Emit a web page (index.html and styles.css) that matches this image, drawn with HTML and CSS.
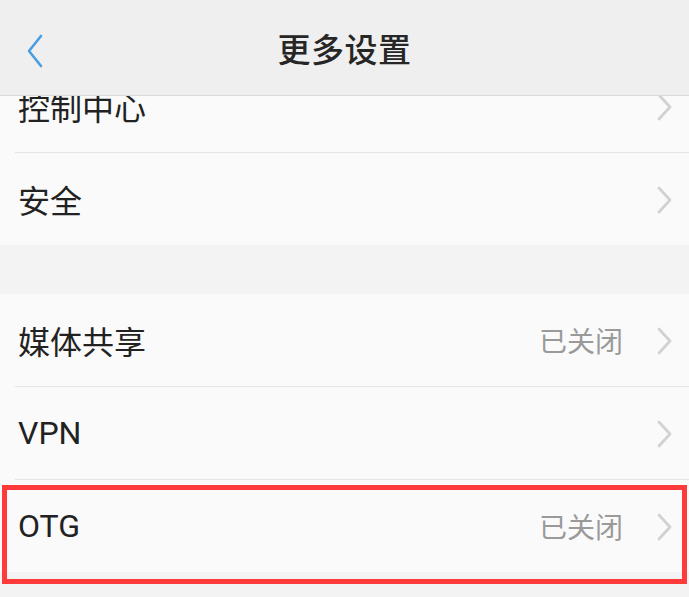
FILE: index.html
```html
<!DOCTYPE html>
<html lang="zh-CN">
<head>
    <meta charset="UTF-8">
    <meta name="viewport" content="width=device-width, initial-scale=1.0">
    <title>更多设置</title>
    <link rel="stylesheet" href="styles.css">
</head>
<body>
    <div class="screen">
        <div class="header">
            <svg class="back" width="24" height="36" viewBox="0 0 24 36">
                <polyline points="17,3 5,18 17,33" fill="none" stroke="#4a9de0" stroke-width="2.6" stroke-linecap="round" stroke-linejoin="round"/>
            </svg>
            <h1>更多设置</h1>
        </div>

        <div class="content">
            <div class="group first">
                <div class="row">
                    <span class="label">控制中心</span>
                    <svg class="chevron" width="18" height="28" viewBox="0 0 18 28"><polyline points="3,2 14,14 3,26" fill="none" stroke="#d2d2d2" stroke-width="2.8" stroke-linecap="round" stroke-linejoin="round"/></svg>
                </div>
                <div class="row">
                    <span class="label">安全</span>
                    <svg class="chevron" width="18" height="28" viewBox="0 0 18 28"><polyline points="3,2 14,14 3,26" fill="none" stroke="#d2d2d2" stroke-width="2.8" stroke-linecap="round" stroke-linejoin="round"/></svg>
                </div>
            </div>

            <div class="group">
                <div class="row">
                    <span class="label">媒体共享</span>
                    <span class="value">已关闭</span>
                    <svg class="chevron" width="18" height="28" viewBox="0 0 18 28"><polyline points="3,2 14,14 3,26" fill="none" stroke="#d2d2d2" stroke-width="2.8" stroke-linecap="round" stroke-linejoin="round"/></svg>
                </div>
                <div class="row">
                    <span class="label">VPN</span>
                    <svg class="chevron" width="18" height="28" viewBox="0 0 18 28"><polyline points="3,2 14,14 3,26" fill="none" stroke="#d2d2d2" stroke-width="2.8" stroke-linecap="round" stroke-linejoin="round"/></svg>
                </div>
                <div class="row">
                    <span class="label">OTG</span>
                    <span class="value">已关闭</span>
                    <svg class="chevron" width="18" height="28" viewBox="0 0 18 28"><polyline points="3,2 14,14 3,26" fill="none" stroke="#d2d2d2" stroke-width="2.8" stroke-linecap="round" stroke-linejoin="round"/></svg>
                </div>
            </div>

            <div class="highlight"></div>
        </div>
    </div>
</body>
</html>
```

FILE: styles.css
```css
body {
    margin: 0;
    padding: 0;
    background-color: #f3f3f3;
    font-family: Roboto, "Noto Sans CJK SC", sans-serif;
    color: #222;
}
.screen {
    width: 689px;
    height: 597px;
    overflow: hidden;
    display: flex;
    flex-direction: column;
}
.header {
    height: 96px;
    flex-shrink: 0;
    background-color: #efefef;
    border-bottom: 1px solid #d9d9d9;
    box-sizing: border-box;
    display: flex;
    align-items: center;
    justify-content: center;
    position: relative;
    z-index: 1;
}
.header h1 {
    margin: 0;
    font-size: 33px;
    font-weight: 500;
    color: #262626;
    letter-spacing: 0.5px;
}
.back {
    position: absolute;
    left: 24px;
    top: 33px;
}
.content {
    flex: 1;
    position: relative;
    overflow: hidden;
}
.group {
    background-color: #fafafa;
    margin-bottom: 49px;
}
.group.first {
    margin-top: -36px;
}
.row {
    height: 92px;
    margin-left: 15px;
    padding-right: 15px;
    display: flex;
    align-items: center;
    border-bottom: 1px solid #e4e4e4;
}
.row:last-child {
    border-bottom: none;
}
.label {
    flex: 1;
    padding-left: 3px;
    font-size: 32px;
    color: #222;
}
.value {
    font-size: 28px;
    color: #9a9a9a;
    margin-right: 33px;
}
.chevron {
    display: block;
    margin-top: 2px;
}
.highlight {
    position: absolute;
    left: 2px;
    top: 389px;
    width: 685px;
    height: 99px;
    box-sizing: border-box;
    border: 5px solid #fe3a3a;
}
```
